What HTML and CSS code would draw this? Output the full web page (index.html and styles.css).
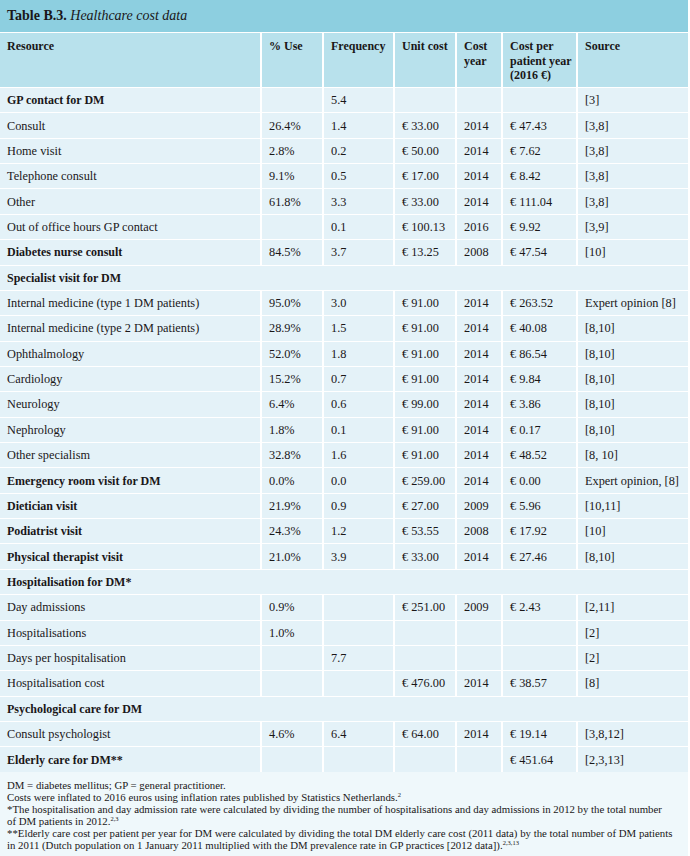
FILE: index.html
```html
<!DOCTYPE html>
<html>
<head>
<meta charset="utf-8">
<link rel="stylesheet" href="styles.css">
</head>
<body>
<div class="page">
  <div class="caption"><b>Table B.3.</b> <i>Healthcare cost data</i></div>
  <table class="data">
    <colgroup>
      <col class="w1"><col class="w2"><col class="w3"><col class="w4"><col class="w5"><col class="w6"><col class="w7">
    </colgroup>
    <thead>
      <tr>
        <th>Resource</th><th>% Use</th><th>Frequency</th><th>Unit cost</th><th>Cost year</th><th>Cost per patient year (2016 €)</th><th>Source</th>
      </tr>
    </thead>
    <tbody>
      <tr><td class="b">GP contact for DM</td><td></td><td>5.4</td><td></td><td></td><td></td><td>[3]</td></tr>
      <tr><td>Consult</td><td>26.4%</td><td>1.4</td><td>€ 33.00</td><td>2014</td><td>€ 47.43</td><td>[3,8]</td></tr>
      <tr><td>Home visit</td><td>2.8%</td><td>0.2</td><td>€ 50.00</td><td>2014</td><td>€ 7.62</td><td>[3,8]</td></tr>
      <tr><td>Telephone consult</td><td>9.1%</td><td>0.5</td><td>€ 17.00</td><td>2014</td><td>€ 8.42</td><td>[3,8]</td></tr>
      <tr><td>Other</td><td>61.8%</td><td>3.3</td><td>€ 33.00</td><td>2014</td><td>€ 111.04</td><td>[3,8]</td></tr>
      <tr><td>Out of office hours GP contact</td><td></td><td>0.1</td><td>€ 100.13</td><td>2016</td><td>€ 9.92</td><td>[3,9]</td></tr>
      <tr><td class="b">Diabetes nurse consult</td><td>84.5%</td><td>3.7</td><td>€ 13.25</td><td>2008</td><td>€ 47.54</td><td>[10]</td></tr>
      <tr><td class="b" colspan="7">Specialist visit for DM</td></tr>
      <tr><td>Internal medicine (type 1 DM patients)</td><td>95.0%</td><td>3.0</td><td>€ 91.00</td><td>2014</td><td>€ 263.52</td><td>Expert opinion [8]</td></tr>
      <tr><td>Internal medicine (type 2 DM patients)</td><td>28.9%</td><td>1.5</td><td>€ 91.00</td><td>2014</td><td>€ 40.08</td><td>[8,10]</td></tr>
      <tr><td>Ophthalmology</td><td>52.0%</td><td>1.8</td><td>€ 91.00</td><td>2014</td><td>€ 86.54</td><td>[8,10]</td></tr>
      <tr><td>Cardiology</td><td>15.2%</td><td>0.7</td><td>€ 91.00</td><td>2014</td><td>€ 9.84</td><td>[8,10]</td></tr>
      <tr><td>Neurology</td><td>6.4%</td><td>0.6</td><td>€ 99.00</td><td>2014</td><td>€ 3.86</td><td>[8,10]</td></tr>
      <tr><td>Nephrology</td><td>1.8%</td><td>0.1</td><td>€ 91.00</td><td>2014</td><td>€ 0.17</td><td>[8,10]</td></tr>
      <tr><td>Other specialism</td><td>32.8%</td><td>1.6</td><td>€ 91.00</td><td>2014</td><td>€ 48.52</td><td>[8, 10]</td></tr>
      <tr><td class="b">Emergency room visit for DM</td><td>0.0%</td><td>0.0</td><td>€ 259.00</td><td>2014</td><td>€ 0.00</td><td>Expert opinion, [8]</td></tr>
      <tr><td class="b">Dietician visit</td><td>21.9%</td><td>0.9</td><td>€ 27.00</td><td>2009</td><td>€ 5.96</td><td>[10,11]</td></tr>
      <tr><td class="b">Podiatrist visit</td><td>24.3%</td><td>1.2</td><td>€ 53.55</td><td>2008</td><td>€ 17.92</td><td>[10]</td></tr>
      <tr><td class="b">Physical therapist visit</td><td>21.0%</td><td>3.9</td><td>€ 33.00</td><td>2014</td><td>€ 27.46</td><td>[8,10]</td></tr>
      <tr><td class="b" colspan="7">Hospitalisation for DM*</td></tr>
      <tr><td>Day admissions</td><td>0.9%</td><td></td><td>€ 251.00</td><td>2009</td><td>€ 2.43</td><td>[2,11]</td></tr>
      <tr><td>Hospitalisations</td><td>1.0%</td><td></td><td></td><td></td><td></td><td>[2]</td></tr>
      <tr><td>Days per hospitalisation</td><td></td><td>7.7</td><td></td><td></td><td></td><td>[2]</td></tr>
      <tr><td>Hospitalisation cost</td><td></td><td></td><td>€ 476.00</td><td>2014</td><td>€ 38.57</td><td>[8]</td></tr>
      <tr><td class="b" colspan="7">Psychological care for DM</td></tr>
      <tr><td>Consult psychologist</td><td>4.6%</td><td>6.4</td><td>€ 64.00</td><td>2014</td><td>€ 19.14</td><td>[3,8,12]</td></tr>
      <tr><td class="b">Elderly care for DM**</td><td></td><td></td><td></td><td></td><td>€ 451.64</td><td>[2,3,13]</td></tr>
    </tbody>
  </table>
  <div class="notes">
    <p>DM = diabetes mellitus; GP = general practitioner.</p>
    <p>Costs were inflated to 2016 euros using inflation rates published by Statistics Netherlands.<sup>2</sup></p>
    <p>*The hospitalisation and day admission rate were calculated by dividing the number of hospitalisations and day admissions in 2012 by the total number<br>of DM patients in 2012.<sup>2,3</sup></p>
    <p>**Elderly care cost per patient per year for DM were calculated by dividing the total DM elderly care cost (2011 data) by the total number of DM patients<br>in 2011 (Dutch population on 1 January 2011 multiplied with the DM prevalence rate in GP practices [2012 data]).<sup>2,3,13</sup></p>
  </div>
</div>
</body>
</html>
```

FILE: styles.css
```css
html, body {
  margin: 0;
  padding: 0;
  background: #ffffff;
}

body {
  font-family: "Liberation Serif", "Times New Roman", serif;
  color: #1a1718;
}

.page {
  width: 688px;
}

.caption {
  background: #8dcfe0;
  height: 32px;
  box-sizing: border-box;
  padding: 7px 7px 0;
  font-size: 14px;
  line-height: 18px;
}

.caption b {
  font-weight: bold;
}

.data {
  width: 688px;
  table-layout: fixed;
  border-collapse: separate;
  border-spacing: 0;
  font-size: 12.3px;
}

.w1 { width: 260px; }
.w2 { width: 62px; }
.w3 { width: 71px; }
.w4 { width: 62px; }
.w5 { width: 46px; }
.w6 { width: 75px; }
.w7 { width: 112px; }

.data th,
.data td {
  border-top: 1.5px solid #ffffff;
  border-left: 2px solid #ffffff;
  padding: 0 3px 0 7px;
  text-align: left;
}

.data th:first-child,
.data td:first-child {
  border-left: 0;
}

.data th {
  background: #b8e1ec;
  font-weight: bold;
  font-size: 12px;
  vertical-align: top;
  height: 55px;
  box-sizing: border-box;
  padding-top: 6px;
  line-height: 14.5px;
}

.data td {
  background: #e4f2f8;
  height: 25.37px;
  box-sizing: border-box;
  vertical-align: middle;
  line-height: 14px;
  white-space: nowrap;
}

.data td.b {
  font-weight: bold;
  font-size: 12px;
}

.notes {
  background: #eff8fb;
  padding: 7px 7px 5px;
  font-size: 10.8px;
  line-height: 12px;
  white-space: nowrap;
}

.notes p {
  margin: 0;
}

.notes sup {
  font-size: 6.5px;
  line-height: 0;
  vertical-align: 4px;
}
```
